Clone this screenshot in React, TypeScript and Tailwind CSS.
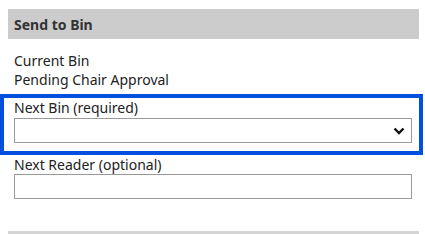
export default function App() {
  return (
    <div className="w-[425px] h-[234px] bg-white text-[14px] text-[#222] font-['Noto_Sans','Liberation_Sans',sans-serif] overflow-hidden">
      <div className="h-[9px]" />
      <div className="ml-[8px] w-[411px] h-[30px] bg-[#cccccc] px-[6px] flex items-center font-bold text-[#333]">
        Send to Bin
      </div>
      <div className="pl-[14px] pt-[12px] leading-[19px]">
        <div>Current Bin</div>
        <div>Pending Chair Approval</div>
      </div>
      <div className="mt-[5px] w-[423px] h-[61px] border-4 border-[#0050e0] px-[10px]">
        <div className="h-[20px] leading-[19px]">Next Bin (required)</div>
        <div className="w-[398px] h-[25px] border border-[#999] bg-white flex items-center justify-end pr-[6px]">
          <svg width="12" height="8" viewBox="0 0 12 8">
            <polyline points="1.5,1.5 6,6 10.5,1.5" fill="none" stroke="#111" strokeWidth="2.4" />
          </svg>
        </div>
      </div>
      <div className="pl-[14px]">
        <div className="h-[19px] leading-[19px]">Next Reader (optional)</div>
        <div className="w-[398px] h-[25px] border border-[#999] bg-white" />
      </div>
      <div className="mt-[32px] ml-[8px] w-[411px] h-[3px] bg-[#d4d4d4]" />
    </div>
  )
}
